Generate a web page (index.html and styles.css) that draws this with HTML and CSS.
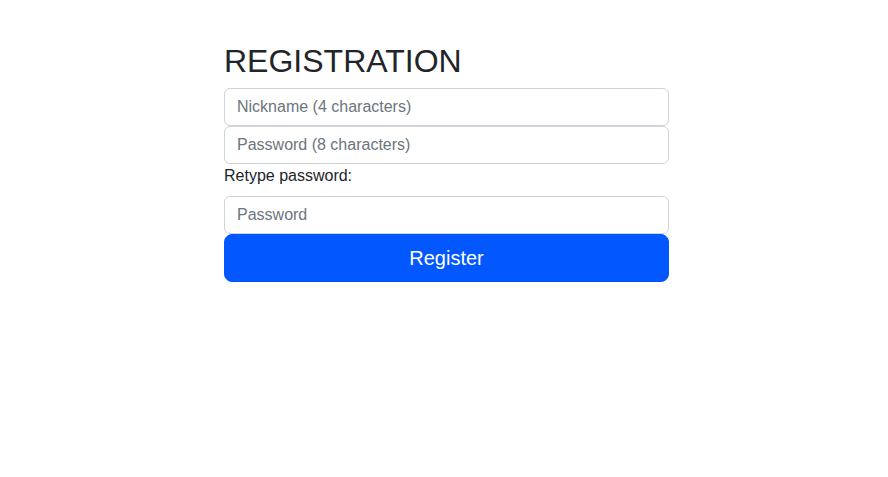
FILE: index.html
```html
<!DOCTYPE html>
<html lang="en">
<head>
<meta charset="utf-8">
<title>Registration</title>
<link rel="stylesheet" href="styles.css">
</head>
<body>
<main class="page">
  <h1 class="title">REGISTRATION</h1>
  <form class="form">
    <input class="field" type="text" placeholder="Nickname (4 characters)">
    <input class="field" type="password" placeholder="Password (8 characters)">
    <label class="label">Retype password:</label>
    <input class="field" type="password" placeholder="Password">
    <button class="btn" type="button">Register</button>
  </form>
</main>
</body>
</html>
```
FILE: styles.css
```css
* { box-sizing: border-box; }
html, body { margin: 0; padding: 0; background: #fff; }
body {
  font-family: "Liberation Sans", Arial, sans-serif;
  font-size: 16px;
  line-height: 1.5;
  color: #212529;
}
.page {
  width: 450px;
  padding-left: 5px;
  margin: 0 auto;
  padding-top: 41.6px;
}
.title {
  margin: 0 0 8px 0;
  font-size: 32px;
  font-weight: 500;
  line-height: 1.2;
}
.form {
  display: flex;
  flex-direction: column;
}
.field {
  display: block;
  width: 100%;
  height: 38px;
  padding: 6px 12px;
  font-family: inherit;
  font-size: 16px;
  line-height: 1.5;
  color: #212529;
  background: #fff;
  border: 1px solid #ced4da;
  border-radius: 6px;
  outline: none;
}
.field::placeholder { color: #6c757d; opacity: 1; }
.label {
  display: block;
  margin-bottom: 8px;
  line-height: 24px;
}
.btn {
  display: block;
  width: 100%;
  height: 48px;
  padding: 8px 16px;
  font-family: inherit;
  font-size: 20px;
  line-height: 1.5;
  color: #fff;
  background: #0257fe;
  border: 1px solid #0257fe;
  border-radius: 8px;
  cursor: pointer;
}
```
